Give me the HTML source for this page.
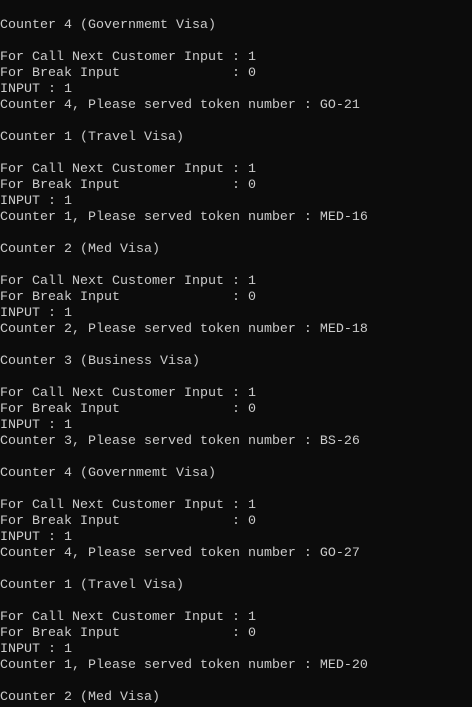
<!DOCTYPE html>
<html><head><style>
html,body{margin:0;padding:0;background:#0c0c0c;width:472px;height:707px;overflow:hidden}
pre{margin:0;padding:18px 0 0 0;font-family:"Liberation Mono",monospace;font-size:13.33px;line-height:16px;color:#cccccc;white-space:pre}
</style></head><body><pre>Counter 4 (Governmemt Visa)

For Call Next Customer Input : 1
For Break Input              : 0
INPUT : 1
Counter 4, Please served token number : GO-21

Counter 1 (Travel Visa)

For Call Next Customer Input : 1
For Break Input              : 0
INPUT : 1
Counter 1, Please served token number : MED-16

Counter 2 (Med Visa)

For Call Next Customer Input : 1
For Break Input              : 0
INPUT : 1
Counter 2, Please served token number : MED-18

Counter 3 (Business Visa)

For Call Next Customer Input : 1
For Break Input              : 0
INPUT : 1
Counter 3, Please served token number : BS-26

Counter 4 (Governmemt Visa)

For Call Next Customer Input : 1
For Break Input              : 0
INPUT : 1
Counter 4, Please served token number : GO-27

Counter 1 (Travel Visa)

For Call Next Customer Input : 1
For Break Input              : 0
INPUT : 1
Counter 1, Please served token number : MED-20

Counter 2 (Med Visa)
</pre></body></html>
